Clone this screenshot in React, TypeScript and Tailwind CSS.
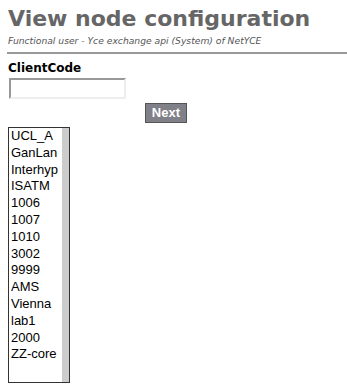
import React from "react";

const items = ["UCL_A","GanLan","Interhyp","ISATM","1006","1007","1010","3002","9999","AMS","Vienna","lab1","2000","ZZ-core"];

export default function App() {
  return (
    <div className="w-[347px] h-[387px] bg-white overflow-hidden" style={{ fontFamily: '"DejaVu Sans", Verdana, sans-serif' }}>
      <div className="pl-[8px] pt-[6px]">
        <h1 className="text-[22px] leading-[26px] font-bold text-[#666666]">View node configuration</h1>
        <div className="mt-[3px] text-[9.2px] leading-[12px] italic text-[#555555]">Functional user - Yce exchange api (System) of NetYCE</div>
      </div>
      <div className="ml-[7px] mt-[5px] h-[2px] bg-[#999999]" />
      <div className="pl-[8px] pt-[7px]">
        <div className="text-[12px] leading-[15px] font-bold text-black">ClientCode</div>
        <div className="mt-[2px] ml-[1px] w-[117px] h-[21px] border-2 border-t-[#999] border-l-[#999] border-b-[#eee] border-r-[#eee] bg-white" />
        <div className="w-[179px] flex justify-end mt-[4px]">
          <button className="h-[20px] px-[6px] bg-[#808088] border border-[#555] text-white font-bold text-[13px] leading-[18px]" style={{ fontFamily: '"Liberation Sans", Arial, sans-serif' }}>Next</button>
        </div>
        <div className="mt-[4px] w-[62px] h-[256px] border border-[#333] flex" style={{ fontFamily: '"Liberation Sans", Arial, sans-serif' }}>
          <div className="flex-1 pl-[2px]">
            {items.map((it) => (
              <div key={it} className="text-[13px] leading-[16.8px] text-black whitespace-nowrap overflow-hidden">{it}</div>
            ))}
          </div>
          <div className="w-[7px] bg-[#cccccc]" />
        </div>
      </div>
    </div>
  );
}
